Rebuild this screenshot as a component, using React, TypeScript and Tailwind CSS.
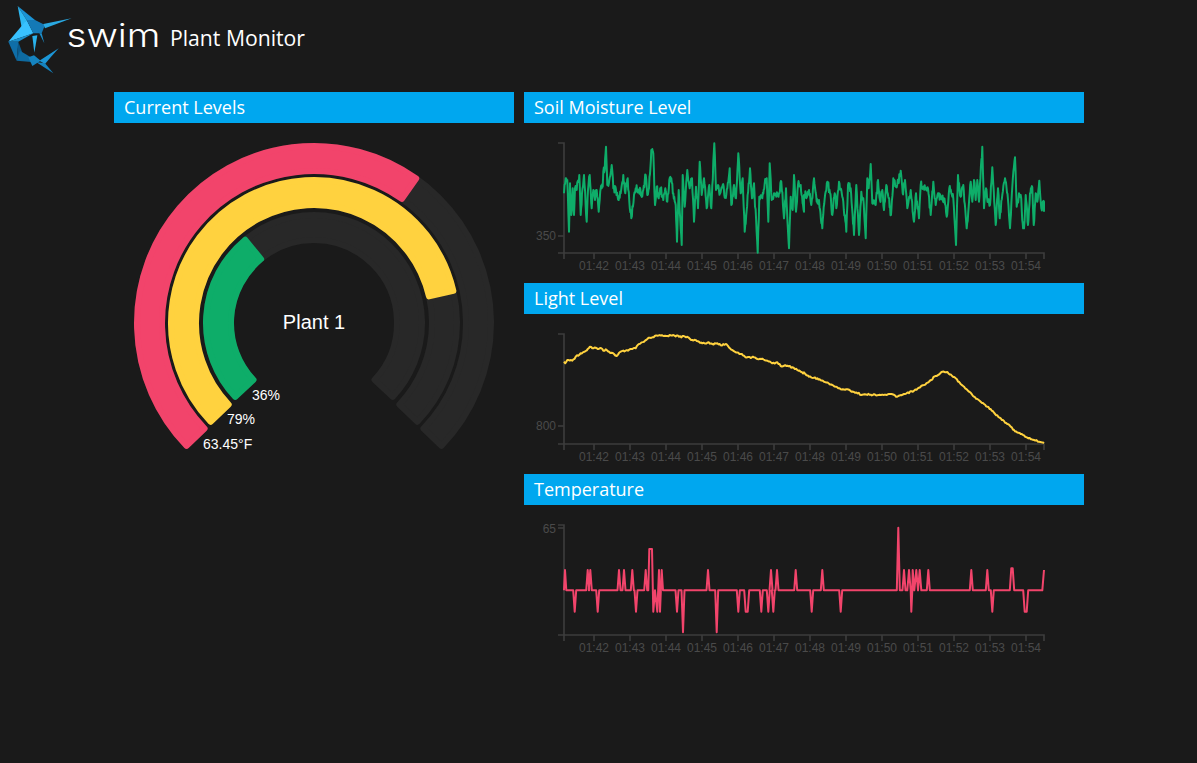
import type { ReactNode } from "react";

const soilA: number[][] = [[120,190],[125,145],[130,150],[135,305],[138,160],[142,255],[146,175],[150,255],[153,175],[158,180],[166,135],[170,255],[174,190],[180,135],[188,275],[192,180],[197,135],[203,235],[208,180],[213,210],[218,180],[224,245],[230,175],[236,170],[238,125],[242,120],[246,50],[250,165],[256,150],[263,105],[268,175],[276,180],[284,210],[290,190],[298,135],[304,190],[311,145],[316,215],[322,265],[330,195],[335,175],[345,178],[352,195],[358,180],[365,135],[370,195],[375,175],[382,60],[388,70],[393,225],[398,170],[404,205],[410,175],[418,210],[424,175],[430,215],[436,150],[442,145],[448,190],[455,225],[459,335],[464,180],[473,345],[476,135],[482,230],[490,120],[497,175],[504,145],[510,275],[516,170],[522,235],[527,95],[533,195],[540,145],[548,235],[556,165],[562,235],[571,40],[576,180],[582,165],[588,190],[596,165],[604,200],[610,175],[617,115],[622,225],[630,165],[636,205],[643,70],[650,190],[656,145],[662,305],[668,240],[678,115],[684,205],[690,160],[701,368],[706,200],[715,205],[722,160],[728,145],[733,275],[737,100],[743,210],[750,190],[757,200],[765,190],[772,155],[780,265],[786,175],[795,355],[800,200],[806,240],[810,135],[816,245],[822,165],[830,165],[840,245]];
const soilB: number[][] = [[0,195],[10,195],[15,180],[22,225],[30,145],[38,215],[45,210],[55,295],[62,205],[70,155],[78,190],[85,255],[92,190],[97,235],[105,155],[112,180],[118,215],[127,305],[132,165],[140,175],[150,315],[157,165],[165,315],[172,185],[178,205],[185,325],[190,145],[194,175],[200,102],[205,220],[215,225],[222,150],[228,210],[235,180],[240,240],[247,165],[254,205],[261,255],[268,145],[275,170],[283,155],[290,122],[296,190],[303,150],[310,235],[320,180],[330,275],[336,190],[345,265],[350,165],[358,170],[365,175],[372,175],[380,255],[388,155],[395,225],[402,190],[410,205],[420,205],[428,260],[436,175],[442,190],[448,205],[456,345],[462,135],[470,200],[478,165],[488,295],[494,230],[500,155],[505,215],[510,150],[515,210],[520,150],[525,215],[535,50],[540,235],[546,175],[552,215],[558,225],[565,112],[575,285],[582,175],[587,265],[595,195],[603,145],[612,210],[618,295],[625,170],[633,82],[638,230],[645,190],[650,195],[656,280],[660,295],[665,195],[672,285],[678,190],[685,172],[689,285],[695,190],[700,215],[706,152],[712,235],[720,215],[720,245]];
const lightA: number[][] = [[120,125],[124,130],[130,120],[145,122],[155,110],[170,100],[185,93],[198,80],[205,85],[232,85],[238,92],[245,88],[255,95],[270,102],[278,108],[290,95],[305,92],[325,87],[335,85],[345,72],[360,65],[370,57],[385,52],[400,47],[420,48],[430,48],[448,45],[465,50],[490,50],[505,60],[525,65],[535,70],[550,68],[565,72],[580,70],[590,76],[605,72],[625,90],[650,102],[670,112],[690,112],[700,117],[715,116],[730,122],[745,130],[760,127],[770,138],[790,137],[805,142],[820,150],[840,160]];
const lightB: number[][] = [[0,157],[15,170],[40,175],[60,185],[85,195],[110,208],[130,208],[150,216],[175,224],[200,224],[220,226],[245,224],[262,222],[280,230],[300,222],[330,212],[345,203],[375,185],[395,168],[415,155],[430,156],[455,175],[480,200],[510,230],[530,245],[550,260],[570,278],[590,295],[610,312],[630,330],[650,342],[670,353],[690,360],[705,365],[720,370]];

const toChart = (a: number[][], b: number[][], oy: number, top: number) => [
  ...a.map(([x, y]) => [x / 3, y / 3 + oy - top]),
  ...b.map(([x, y]) => [x / 3 + 280, y / 3 + oy - top]),
];
const pts = (p: number[][]) => p.map(([x, y]) => `${x.toFixed(1)},${y.toFixed(1)}`).join(" ");

const jitter = (p: number[][], step: number, amp: number) => {
  const out: number[][] = [];
  let n = 0;
  for (let i = 0; i < p.length - 1; i++) {
    const [x0, y0] = p[i];
    const [x1, y1] = p[i + 1];
    const steps = Math.max(1, Math.round((x1 - x0) / step));
    for (let s = 0; s < steps; s++) {
      n++;
      const t = s / steps;
      const w = Math.sin(n * 12.9898) * 43758.5453;
      const r = w - Math.floor(w) - 0.5;
      out.push([x0 + (x1 - x0) * t, y0 + (y1 - y0) * t + (s === 0 ? 0 : r * amp)]);
    }
  }
  out.push(p[p.length - 1]);
  return out;
};

const soil = jitter(toChart(soilA, soilB, 130, 123), 0.5, 8);
const light = jitter(toChart(lightA, lightB, 320, 314), 1.2, 1.6);

const tempBuild = (items: number[][]) => {
  const out: number[][] = [];
  for (const [x, y, pl = 0] of items) {
    out.push([x - 4.5 - pl, 226]);
    out.push([x - pl, y]);
    if (pl) out.push([x + pl, y]);
    out.push([x + 4.5 + pl, 226]);
  }
  return out;
};
const tempA = [[120, 226], [123, 165], [127, 226], ...tempBuild([[152,290],[191,165],[199,165],[221,290],[285,165],[300,165],[325,165],[336,290],[365,165]]), [373,226],[376,102],[384,102],[388,290],[393,226],[400,290],[405,165],[408,290],[413,165],[417,226], ...tempBuild([[459,290],[477,352],[552,165],[578,352],[643,290],[668,290,3],[712,290],[733,290],[741,165],[748,290],[759,165],[815,165]]), [840,226]];
const tempB = [[0,226], ...tempBuild([[23,290],[55,165],[110,290],[283,38],[300,165]]), [310,226],[315,165],[320,226],[322,290],[325,226],[326,165],[331,226],[337,165],[342,226],[347,165],[352,226], ...tempBuild([[373,165],[502,165],[550,165],[565,290],[624,160,2],[665,290,3]]), [715,226],[720,165]];
const temp = toChart(tempA, tempB, 515, 505);

const tickXs = [70,106,142,178,214,250,286,322,358,394,430,466,502];
const labels = ["01:42","01:43","01:44","01:45","01:46","01:47","01:48","01:49","01:50","01:51","01:52","01:53","01:54"];

function Chart({ points, color, yTick, yLabel, labelY }: { points: number[][]; color: string; yTick: number; yLabel: string; labelY: number }) {
  const axis = "#3d3d3d";
  return (
    <svg width="560" height="160" className="block">
      <path d="M34 20H40V130M34 130H520V136M40 130V136" fill="none" stroke={axis} strokeWidth="1.6" />
      <line x1="34" x2="40" y1={yTick} y2={yTick} stroke={axis} strokeWidth="1.6" />
      {tickXs.map((x, i) => (
        <g key={x}>
          <line x1={x} x2={x} y1="130" y2="136" stroke={axis} strokeWidth="1.6" />
          <text x={x} y="146.5" textAnchor="middle" fontSize="12" fill="#4a4a4a" className="font-['Liberation_Sans',sans-serif]">{labels[i]}</text>
        </g>
      ))}
      <text x="32" y={labelY} textAnchor="end" fontSize="12" fill="#4a4a4a" className="font-['Liberation_Sans',sans-serif]">{yLabel}</text>
      <polyline points={pts(points)} fill="none" stroke={color} strokeWidth="2" strokeLinejoin="round" />
    </svg>
  );
}

function arc(inner: number, outer: number, a0: number, a1: number) {
  const cx = 200, cy = 200, inset = 3;
  const ri = inner + inset, ro = outer - inset;
  const P = (r: number, deg: number) => {
    const t = (deg * Math.PI) / 180;
    return `${(cx + r * Math.sin(t)).toFixed(2)} ${(cy - r * Math.cos(t)).toFixed(2)}`;
  };
  const da = (inset / ((inner + outer) / 2)) * (180 / Math.PI);
  const s = a0 + da, e = a1 - da;
  const large = e - s > 180 ? 1 : 0;
  return `M${P(ro, s)}A${ro} ${ro} 0 ${large} 1 ${P(ro, e)}L${P(ri, e)}A${ri} ${ri} 0 ${large} 0 ${P(ri, s)}Z`;
}

function Ring({ inner, outer, pct, color }: { inner: number; outer: number; pct: number; color: string }) {
  return (
    <>
      <path d={arc(inner, outer, -135, 135)} fill="#282828" stroke="#282828" strokeWidth="6" strokeLinejoin="round" />
      <path d={arc(inner, outer, -135, -135 + 2.7 * pct)} fill={color} stroke={color} strokeWidth="6" strokeLinejoin="round" />
    </>
  );
}

function Gauge() {
  const sans = "font-['Liberation_Sans',Arial,sans-serif]";
  return (
    <svg width="400" height="400" className="block">
      <Ring inner={149} outer={180} pct={63.45} color="#f2446b" />
      <Ring inner={115} outer={146} pct={79} color="#ffd23f" />
      <Ring inner={80} outer={111} pct={36} color="#0ead69" />
      <text x="200" y="206" textAnchor="middle" fontSize="20" fill="#ffffff" className={sans}>Plant 1</text>
      <text x="138" y="277" fontSize="14" fill="#ffffff" className={sans}>36%</text>
      <text x="113" y="301" fontSize="14" fill="#ffffff" className={sans}>79%</text>
      <text x="89" y="326" fontSize="14" fill="#ffffff" className={sans}>63.45°F</text>
    </svg>
  );
}

function Logo() {
  const polys: [string, string][] = [
    ["53,18 105,60 80,60", "#1b93d4"],
    ["53,18 80,60 66,88", "#2db8f2"],
    ["80,60 25,125 100,100", "#38c1ff"],
    ["80,60 105,60 135,75 125,100 100,100", "#1479b6"],
    ["130,72 215,55 135,85", "#2aa9e2"],
    ["25,125 100,100 55,125", "#1a8fcc"],
    ["25,125 55,125 50,182", "#0f6ea8"],
    ["55,125 66,155 50,182", "#0a5a8c"],
    ["97,108 112,106 103,158", "#2ab2ec"],
    ["118,100 133,130 125,100", "#1c8fcb"],
    ["50,182 60,152 100,176 95,186", "#0e6aa0"],
    ["85,172 102,166 122,182 97,198", "#1583bf"],
    ["118,182 176,145 152,172 135,192", "#1c96d6"],
    ["108,186 135,190 160,220", "#1583bf"],
  ];
  return (
    <svg width="90" height="80" viewBox="0 0 270 240" className="block shrink-0">
      {polys.map(([p, c]) => <polygon key={p} points={p} fill={c} />)}
    </svg>
  );
}

function Title({ children }: { children: ReactNode }) {
  return (
    <div className="h-[31px] bg-[#00a7ef] pl-[10px] font-['Open_Sans',sans-serif] text-[18px] leading-[31px] text-white">
      {children}
    </div>
  );
}

export default function App() {
  return (
    <div className="min-h-screen bg-[#1a1a1a]">
      <header className="flex h-[76px] items-start">
        <Logo />
        <svg width="98" height="76" className="-ml-[24px] block shrink-0">
          <text x="0.5" y="47" fontSize="33" fill="#ffffff" textLength="94" lengthAdjust="spacingAndGlyphs" className="font-['Inter',sans-serif] font-light">swim</text>
        </svg>
        <span className="ml-[6px] mt-[23px] font-['Open_Sans',sans-serif] text-[21.2px] leading-[30px] text-white">Plant Monitor</span>
      </header>
      <main className="ml-[114px] flex w-[970px] gap-[10px] pt-[16px]">
        <section className="w-[400px]">
          <Title>Current Levels</Title>
          <Gauge />
        </section>
        <section className="w-[560px]">
          <Title>Soil Moisture Level</Title>
          <Chart points={soil} color="#0ead69" yTick={113} yLabel="350" labelY={116.5} />
          <Title>Light Level</Title>
          <Chart points={light} color="#ffd23f" yTick={112} yLabel="800" labelY={115.5} />
          <Title>Temperature</Title>
          <Chart points={temp} color="#f2446b" yTick={23} yLabel="65" labelY={28} />
        </section>
      </main>
    </div>
  );
}
